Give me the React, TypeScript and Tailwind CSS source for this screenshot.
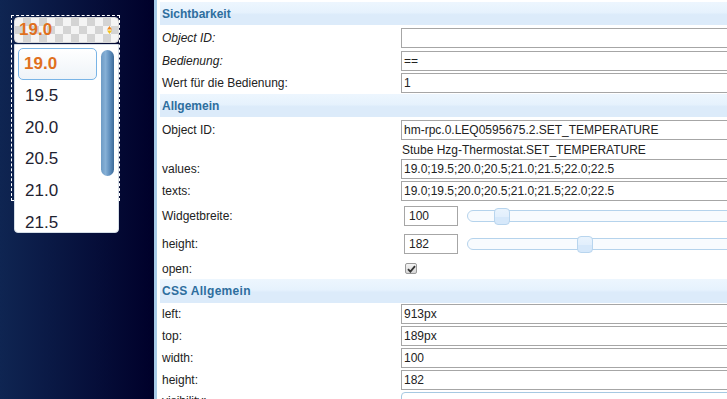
const header =
  "h-[23px] shrink-0 flex items-center pl-[2px] font-bold text-[#2e6e9e] bg-[linear-gradient(#edf6fe_0%,#e6f2fd_45%,#dcebfa_55%,#dcebfa_100%)]";

function Label({ children, italic }: { children: React.ReactNode; italic?: boolean }) {
  return <div className={"w-[241px] shrink-0 pl-[2px] " + (italic ? "italic" : "")}>{children}</div>;
}

function Field({ value }: { value?: string }) {
  return (
    <div className="flex-1 -mr-[6px] h-[20px] border border-[#a6a6a6] bg-white pl-[2px] flex items-center whitespace-nowrap overflow-hidden">
      {value}
    </div>
  );
}

function Row({ label, value, italic, h = "h-[22px]" }: { label: string; value?: string; italic?: boolean; h?: string }) {
  return (
    <div className={"flex items-center shrink-0 " + h}>
      <Label italic={italic}>{label}</Label>
      <Field value={value} />
    </div>
  );
}

function SliderRow({ label, value, pos }: { label: string; value: string; pos: string }) {
  return (
    <div className="flex items-center shrink-0 h-[28px]">
      <Label>{label}</Label>
      <div className="ml-[3px] w-[54px] h-[20px] border border-[#a6a6a6] bg-white pl-[4px] flex items-center">{value}</div>
      <div className="ml-[9px] flex-1 -mr-[20px] h-[12px] rounded-l-[6px] border border-[#b5d3ec] bg-[#f8fbfe] relative">
        <div
          className={
            "absolute top-[-3px] w-[16px] h-[17px] rounded-[4px] border border-[#b8d5ee] bg-[linear-gradient(#e9f3fd_0%,#e2effc_50%,#d6e8fa_50%,#d6e8fa_100%)] " +
            pos
          }
        />
      </div>
    </div>
  );
}

function Checkbox() {
  return (
    <div className="ml-[4px] w-[12px] h-[11px] rounded-[2px] border border-[#9a9a9a] bg-[linear-gradient(#f4f4f4,#d6d6d6)] flex items-center justify-center">
      <svg width="9" height="8" viewBox="0 0 9 8">
        <path d="M1 4.2 L3.4 6.6 L8 1.2" fill="none" stroke="#333" strokeWidth="1.8" />
      </svg>
    </div>
  );
}

function Widget() {
  const items = ["19.5", "20.0", "20.5", "21.0", "21.5"];
  return (
    <>
      <div className="absolute left-[11px] top-[15px] w-[109px] h-[186px] border border-dashed border-white" />
      <div className="absolute left-[14px] top-[17px] w-[105px] h-[26px] rounded-[4px] border border-[#d9d9d9] bg-[repeating-conic-gradient(#d4d4d4_0_25%,#f4f4f4_0_50%)] bg-[length:16px_16px] flex items-center pl-[4px]">
        <span className="text-[17px] font-bold text-[#e0701e]">19.0</span>
        <svg className="absolute left-[92px] top-[8px]" width="5" height="8" viewBox="0 0 5 8">
          <path d="M0 3.4 L2.5 0 L5 3.4 Z" fill="#f0861c" />
          <path d="M0 4.6 L2.5 8 L5 4.6 Z" fill="#f5c21a" />
        </svg>
      </div>
      <div className="absolute left-[14px] top-[44px] w-[105px] h-[189px] rounded-b-[4px] border border-[#d4dde6] bg-white overflow-hidden flex">
        <div className="flex flex-col pl-[3px] pt-[3px]">
          <div className="w-[79px] h-[32px] shrink-0 rounded-[5px] border border-[#79b4e6] bg-[linear-gradient(#ffffff,#eef3f8)] flex items-center pl-[5px] text-[17px] font-bold text-[#e0701e]">
            19.0
          </div>
          {items.map((v) => (
            <div key={v} className="h-[31.7px] shrink-0 flex items-center pl-[7px] text-[17px] text-[#1e2230]">
              {v}
            </div>
          ))}
        </div>
        <div className="ml-[4px] mt-[5px] w-[13px] h-[126px] rounded-full bg-[linear-gradient(90deg,#6d9bc5_0%,#86b0d6_35%,#5c8cbb_70%,#3c6a98_100%)]" />
      </div>
    </>
  );
}

export default function App() {
  return (
    <div className="flex w-[727px] h-[399px] overflow-hidden font-['Liberation_Sans',Arial,sans-serif] text-[12px] text-[#222]">
      <div className="w-[154px] shrink-0 relative bg-[linear-gradient(90deg,#0f2552,#00002a)]">
        <Widget />
      </div>
      <div className="w-[3px] shrink-0 bg-[#a9cbe7]" />
      <div className="flex-1 bg-white pl-[3px] pt-[2px] flex flex-col overflow-hidden">
        <div className={header}>Sichtbarkeit</div>
        <Row label="Object ID:" italic h="h-[25px]" />
        <Row label="Bedienung:" italic value="==" />
        <Row label="Wert für die Bedienung:" value="1" />
        <div className={header}>Allgemein</div>
        <Row label="Object ID:" value="hm-rpc.0.LEQ0595675.2.SET_TEMPERATURE" h="h-[25px]" />
        <div className="flex items-center shrink-0 h-[15px]">
          <Label>{""}</Label>
          <div className="pl-[1px]">Stube Hzg-Thermostat.SET_TEMPERATURE</div>
        </div>
        <Row label="values:" value="19.0;19.5;20.0;20.5;21.0;21.5;22.0;22.5" h="h-[23px]" />
        <Row label="texts:" value="19.0;19.5;20.0;20.5;21.0;21.5;22.0;22.5" />
        <SliderRow label="Widgetbreite:" value="100" pos="left-[26px]" />
        <SliderRow label="height:" value="182" pos="left-[109px]" />
        <div className="flex items-center shrink-0 h-[21px]">
          <Label>open:</Label>
          <Checkbox />
        </div>
        <div className={header + " h-[24px] tracking-[0.3px]"}>CSS Allgemein</div>
        <Row label="left:" value="913px" />
        <Row label="top:" value="189px" />
        <Row label="width:" value="100" />
        <Row label="height:" value="182" />
        <div className="flex items-start shrink-0 h-[22px] pt-[1px]">
          <Label>visibility:</Label>
          <div className="flex-1 -mr-[6px] h-[20px] rounded-[4px] border border-[#a6c9e2] bg-white" />
        </div>
      </div>
    </div>
  );
}
